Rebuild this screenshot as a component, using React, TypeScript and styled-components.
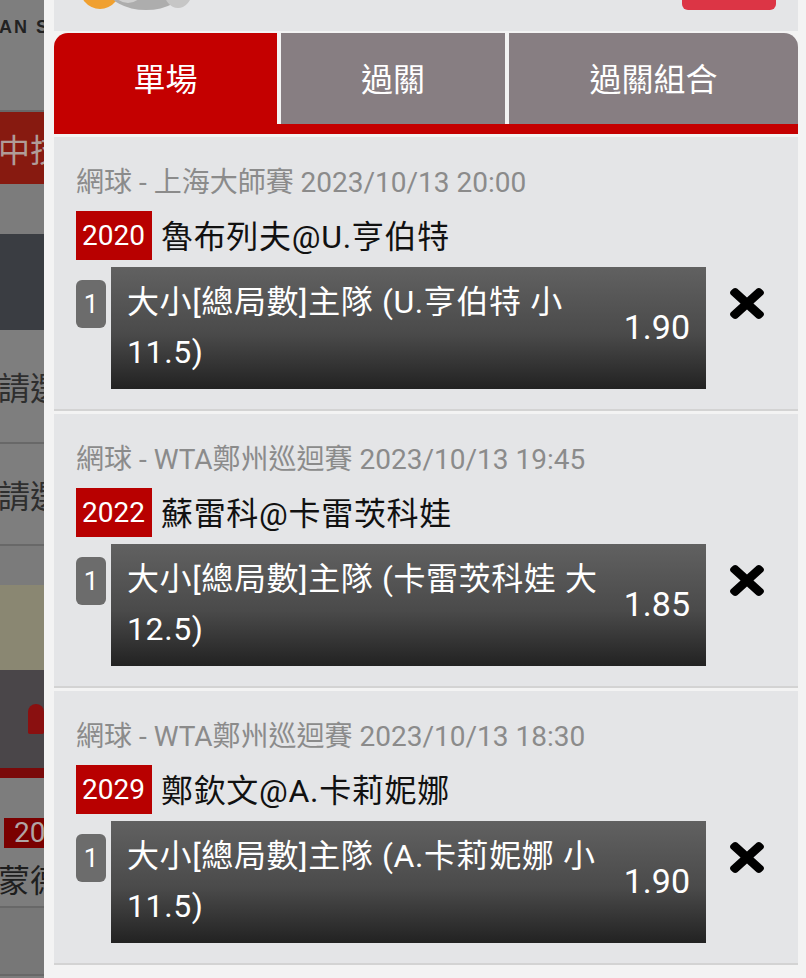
import styled, { createGlobalStyle } from "styled-components"

const GlobalStyle = createGlobalStyle`
	html, body {
		margin: 0;
		padding: 0;
		background: #f3f3f3;
	}
	body {
		font-family: Roboto, "Noto Sans CJK TC", sans-serif;
	}
`

const Screen = styled.div`
	display: flex;
	width: 806px;
	height: 978px;
	overflow: hidden;
`

/* dimmed page that sits behind the bet slip */
const Backdrop = styled.div`
	width: 44px;
	flex-shrink: 0;
	display: flex;
	flex-direction: column;
	overflow: hidden;
	background: #7d7d7d;
`

const Strip = styled.div<{ $h: number; $bg: string; $line?: boolean }>`
	height: ${(p) => p.$h}px;
	flex-shrink: 0;
	background: ${(p) => p.$bg};
	border-bottom: ${(p) => (p.$line ? "2px solid #686868" : "none")};
	display: flex;
	align-items: center;
	white-space: nowrap;
	overflow: hidden;
`

const StripText = styled.span<{ $color: string; $size: number; $weight?: number; $shift?: number }>`
	color: ${(p) => p.$color};
	font-size: ${(p) => p.$size}px;
	font-weight: ${(p) => p.$weight ?? 400};
	margin-left: ${(p) => p.$shift ?? -2}px;
`

const Brand = styled(StripText)`
	font-family: "Liberation Sans", sans-serif;
	letter-spacing: 2px;
	margin-top: -56px;
`

const StripBadge = styled.span`
	margin-left: 4px;
	background: #7a0000;
	color: #b0a4a4;
	font-size: 28px;
	padding: 0 10px;
	line-height: 30px;
`

const Blob = styled.span`
	width: 18px;
	height: 30px;
	margin-left: 28px;
	border-radius: 9px 9px 2px 2px;
	background: #8a1010;
`

const Sheet = styled.div`
	flex: 1;
	display: flex;
	flex-direction: column;
	padding: 0 8px 0 10px;
	background: #f3f3f3;
`

const Header = styled.div`
	height: 31px;
	flex-shrink: 0;
	background: #e4e5e7;
	display: flex;
	align-items: flex-end;
	overflow: hidden;
	padding: 0 22px 0 26px;
`

const Logo = styled.svg`
	width: 112px;
	height: 60px;
	flex-shrink: 0;
	margin-bottom: 20px;
`

const HeaderButton = styled.div`
	margin-left: auto;
	width: 94px;
	height: 50px;
	margin-bottom: 21px;
	border-radius: 6px;
	background: #dc3545;
`

const Tabs = styled.div`
	margin-top: 2px;
	height: 91px;
	flex-shrink: 0;
	display: grid;
	grid-template-columns: 223px 224px 1fr;
	gap: 4px;
`

const Tab = styled.div<{ $active?: boolean }>`
	display: flex;
	align-items: center;
	justify-content: center;
	padding-bottom: 4px;
	color: #fff;
	font-size: 32px;
	background: ${(p) => (p.$active ? "#c40000" : "#877e82")};
	&:first-child {
		border-top-left-radius: 14px;
	}
	&:last-child {
		border-top-right-radius: 14px;
	}
`

const TabBar = styled.div`
	height: 10px;
	flex-shrink: 0;
	background: #c40000;
	margin-bottom: 3px;
`

const Card = styled.div`
	flex-shrink: 0;
	background: #e4e5e7;
	padding: 30px 0 20px 22px;
	border-bottom: 2px solid #d3d3d3;
	margin-bottom: 3px;
	display: flex;
	flex-direction: column;
`

const Meta = styled.div`
	font-size: 28px;
	line-height: 32px;
	color: #8b8b8b;
	white-space: nowrap;
`

const MatchRow = styled.div`
	margin-top: 12px;
	display: flex;
	align-items: center;
	gap: 9px;
`

const MatchNo = styled.span`
	height: 49px;
	padding: 0 7px 0 6px;
	display: flex;
	align-items: center;
	background: #b80000;
	color: #fff;
	font-size: 28px;
`

const Teams = styled.span`
	font-size: 32px;
	letter-spacing: 0.7px;
	margin-top: -4px;
	color: #111;
	white-space: nowrap;
`

const BetRow = styled.div`
	margin-top: 7px;
	display: flex;
	align-items: flex-start;
`

const Index = styled.span`
	margin-top: 13px;
	width: 30px;
	height: 48px;
	border-radius: 6px;
	background: #6c6c6c;
	color: #fff;
	font-size: 26px;
	display: flex;
	align-items: center;
	justify-content: center;
	flex-shrink: 0;
`

const Selection = styled.div`
	margin-left: 5px;
	width: 595px;
	min-height: 122px;
	box-sizing: border-box;
	padding: 10px 16px 12px 16px;
	display: flex;
	align-items: center;
	background: linear-gradient(to bottom, #616161 0%, #4a4a4a 55%, #222 100%);
	color: #fff;
	font-size: 32px;
`

const SelectionText = styled.span`
	flex: 1;
	line-height: 50px;
	letter-spacing: 0.6px;
	padding-right: 18px;
`

const Odds = styled.span`
	flex-shrink: 0;
	font-size: 34px;
`

const Remove = styled.svg`
	margin: 21px 0 0 24px;
	width: 34px;
	height: 31px;
	flex-shrink: 0;
`

type Bet = {
	meta: string
	no: string
	teams: string
	pick: string
	odds: string
}

const bets: Bet[] = [
	{
		meta: "網球 - 上海大師賽 2023/10/13 20:00",
		no: "2020",
		teams: "魯布列夫@U.亨伯特",
		pick: "大小[總局數]主隊 (U.亨伯特 小 11.5)",
		odds: "1.90",
	},
	{
		meta: "網球 - WTA鄭州巡迴賽 2023/10/13 19:45",
		no: "2022",
		teams: "蘇雷科@卡雷茨科娃",
		pick: "大小[總局數]主隊 (卡雷茨科娃 大 12.5)",
		odds: "1.85",
	},
	{
		meta: "網球 - WTA鄭州巡迴賽 2023/10/13 18:30",
		no: "2029",
		teams: "鄭欽文@A.卡莉妮娜",
		pick: "大小[總局數]主隊 (A.卡莉妮娜 小 11.5)",
		odds: "1.90",
	},
]

function CrossIcon() {
	return (
		<Remove
			viewBox="0 80 352 352"
			preserveAspectRatio="none"
		>
			<path
				fill="#000"
				d="M242.72 256l100.07-100.07c12.28-12.28 12.28-32.19 0-44.48l-22.24-22.24c-12.28-12.28-32.19-12.28-44.48 0L176 189.28 75.930 89.21c-12.28-12.28-32.19-12.28-44.48 0L9.21 111.45c-12.28 12.28-12.28 32.19 0 44.48L109.28 256 9.21 356.07c-12.28 12.28-12.28 32.19 0 44.48l22.24 22.24c12.28 12.28 32.2 12.28 44.48 0L176 322.72l100.07 100.07c12.28 12.28 32.2 12.28 44.48 0l22.24-22.24c12.28-12.28 12.28-32.19 0-44.48L242.72 256z"
			/>
		</Remove>
	)
}

export default function App() {
	return (
		<>
			<GlobalStyle />
			<Screen>
				<Backdrop>
					<Strip $h={110} $bg="#7e7e7e" $line>
						<Brand $color="#222" $size={18} $weight={700} $shift={-1}>
							AN SPORT
						</Brand>
					</Strip>
					<Strip $h={72} $bg="#871a10">
						<StripText $color="#b09c98" $size={32}>
							中技
						</StripText>
					</Strip>
					<Strip $h={50} $bg="#7c7c7c" />
					<Strip $h={96} $bg="#3a3d42" />
					<Strip $h={112} $bg="#7e7e7e" $line>
						<StripText $color="#2e2e2e" $size={32}>
							請選
						</StripText>
					</Strip>
					<Strip $h={100} $bg="#7e7e7e" $line>
						<StripText $color="#2e2e2e" $size={32}>
							請選
						</StripText>
					</Strip>
					<Strip $h={39} $bg="#7b7b7b" />
					<Strip $h={85} $bg="#8a8772" />
					<Strip $h={98} $bg="#4a4649">
						<Blob />
					</Strip>
					<Strip $h={10} $bg="#7a0a0a" />
					<Strip $h={38} $bg="#7d7d7d" />
					<Strip $h={34} $bg="#7d7d7d">
						<StripBadge>2020</StripBadge>
					</Strip>
					<Strip $h={56} $bg="#7d7d7d" $line>
						<StripText $color="#1e1e1e" $size={32}>
							蒙德
						</StripText>
					</Strip>
					<Strip $h={66} $bg="#777" $line />
				</Backdrop>

				<Sheet>
					<Header>
						<Logo viewBox="0 0 112 60">
							<ellipse cx="20" cy="32" rx="22" ry="26" fill="#f0a030" />
							<ellipse cx="66" cy="38" rx="38" ry="21" fill="#adadad" />
							<ellipse cx="98" cy="40" rx="14" ry="17" fill="#c6c6c6" />
							<ellipse cx="48" cy="36" rx="16" ry="16" fill="#cfcfcf" />
						</Logo>
						<HeaderButton />
					</Header>

					<Tabs>
						<Tab $active>單場</Tab>
						<Tab>過關</Tab>
						<Tab>過關組合</Tab>
					</Tabs>
					<TabBar />

					{bets.map((bet) => (
						<Card key={bet.no}>
							<Meta>{bet.meta}</Meta>
							<MatchRow>
								<MatchNo>{bet.no}</MatchNo>
								<Teams>{bet.teams}</Teams>
							</MatchRow>
							<BetRow>
								<Index>1</Index>
								<Selection>
									<SelectionText>{bet.pick}</SelectionText>
									<Odds>{bet.odds}</Odds>
								</Selection>
								<CrossIcon />
							</BetRow>
						</Card>
					))}
				</Sheet>
			</Screen>
		</>
	)
}
